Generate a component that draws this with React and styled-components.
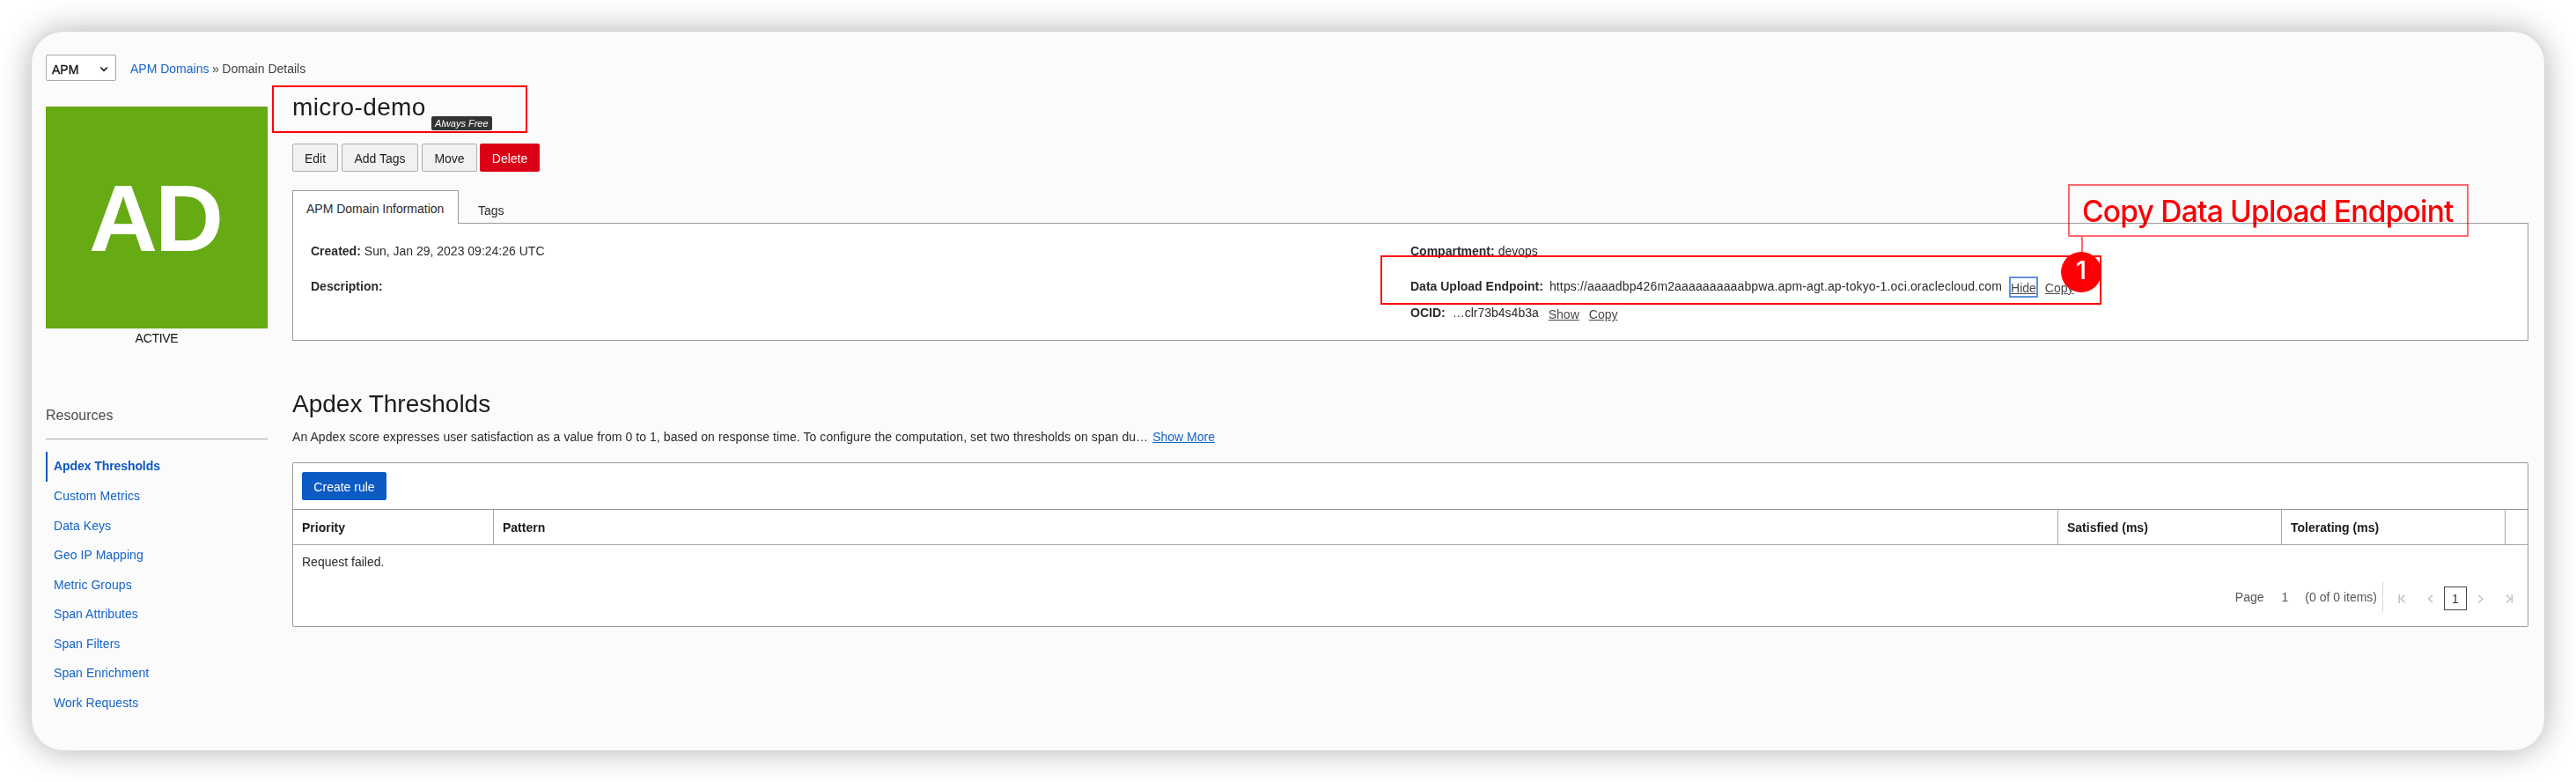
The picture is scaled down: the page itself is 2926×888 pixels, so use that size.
import React from "react";
import styled, { createGlobalStyle, css } from "styled-components";

const Global = createGlobalStyle`
  *, *::before, *::after { box-sizing: border-box; }
  html, body { margin: 0; padding: 0; background: #fff; }
  body { overflow: hidden; }
`;

const Stage = styled.div`
  width: 2926px;
  height: 888px;
  padding: 36px;
  background: #fff;
  font-family: "Liberation Sans", Arial, Helvetica, sans-serif;
  font-size: 14px;
  line-height: 20px;
  color: #2b2b2b;
`;

const Window = styled.div`
  position: relative;
  width: 2854px;
  height: 816px;
  padding: 26px 18px 0 16px;
  border-radius: 36px;
  background: #fbfbfb;
  box-shadow: 0 0 36px rgba(0, 0, 0, 0.32);
`;

const Breadcrumb = styled.nav`
  display: flex;
  height: 30px;
`;

const ServiceSelect = styled.div`
  display: flex;
  align-items: center;
  justify-content: space-between;
  width: 80px;
  height: 30px;
  padding: 3px 8px 0 6px;
  border: 1px solid #a3a8b1;
  border-radius: 2px;
  background: #fff;
  color: #1a1a1a;
  -webkit-text-stroke: 0.4px #1a1a1a;
`;

const Trail = styled.div`
  display: flex;
  gap: 3.5px;
  margin-left: 16px;
  padding-top: 6px;
  color: #404040;
`;

const Link = styled.a`
  color: #1463c8;
  text-decoration: ${(p) => (p.$underline ? "underline" : "none")};
`;

const Columns = styled.div`
  display: grid;
  grid-template-columns: 252px 2540px;
  column-gap: 28px;
`;

const Sidebar = styled.aside`
  padding-top: 29px;
`;

const StatusTile = styled.div`
  height: 252px;
  background: #66aa14;
  color: #fff;
  font-size: 108px;
  font-weight: 700;
  line-height: 253px;
  letter-spacing: -3px;
  text-align: center;
  text-indent: -4px;
`;

const StatusLabel = styled.div`
  height: 22px;
  padding-top: 1px;
  color: #111;
  letter-spacing: -0.3px;
  text-align: center;
`;

const ResourcesTitle = styled.h2`
  height: 38px;
  margin: 66px 0 0;
  border-bottom: 1px solid #a3aab2;
  color: #4a4a4a;
  font-size: 16px;
  font-weight: 400;
  line-height: 22px;
`;

const ResourceList = styled.ul`
  margin: 14px 0 0;
  padding: 0;
  list-style: none;
`;

const ResourceItem = styled.li`
  height: 33.5px;
  padding: 6.5px 0 0 9px;
  color: #1463c8;
  letter-spacing: 0.06px;

  ${(p) =>
    p.$active &&
    css`
      padding: 6px 0 0 7px;
      border-left: 2px solid #0b57c2;
      color: #0b57c2;
      font-weight: 700;
      letter-spacing: -0.08px;
    `}
`;

const Main = styled.main`
  padding-top: 17px;
`;

const TitleRow = styled.div`
  display: flex;
  height: 54px;
  gap: 6px;
`;

const Heading = styled.h1`
  margin: 0;
  color: #1c1c1c;
  font-size: 28px;
  font-weight: 400;
  line-height: 25px;
  letter-spacing: ${(p) => p.$spacing || "0"};
`;

const FreeBadge = styled.span`
  width: 69px;
  height: 16px;
  margin-top: 23px;
  border-radius: 2px;
  background: #333;
  color: #fff;
  font-size: 11px;
  font-style: italic;
  line-height: 16px;
  text-align: center;
`;

const tones = {
  plain: { bg: "#f1f1f1", line: "#a6adb6", ink: "#1c1c1c" },
  danger: { bg: "#dc0016", line: "#dc0016", ink: "#fff" },
  primary: { bg: "#0c5ac4", line: "#0c5ac4", ink: "#fff" },
};

const Button = styled.button`
  width: ${(p) => p.$width}px;
  height: 32px;
  padding: 2px 0 0;
  border: 1px solid ${(p) => tones[p.$tone || "plain"].line};
  border-radius: 2px;
  background: ${(p) => tones[p.$tone || "plain"].bg};
  color: ${(p) => tones[p.$tone || "plain"].ink};
  font: inherit;
`;

const Actions = styled.div`
  display: flex;
  gap: 4px;

  ${Button}:last-child {
    margin-left: -1px;
  }
`;

const Tabs = styled.div`
  display: flex;
  height: 38px;
  margin-top: 21px;
`;

const Tab = styled.div`
  padding: 13px 22px 0;

  ${(p) =>
    p.$active &&
    css`
      position: relative;
      z-index: 1;
      width: 189px;
      padding: 10px 15px 0;
      border: 1px solid #999;
      border-bottom: 0;
      background: #fff;
    `}
`;

const InfoPanel = styled.section`
  display: grid;
  grid-template-columns: 1249px 1fr;
  height: 134px;
  margin-top: -1px;
  padding: 21px 20px 0;
  border: 1px solid #999;
  background: #fff;
`;

const Field = styled.div`
  display: flex;
  height: ${(p) => p.$height || 40}px;
  white-space: pre;
`;

const Label = styled.strong`
  margin-right: ${(p) => p.$gap || 4}px;
`;

const Endpoint = styled.span`
  letter-spacing: 0.145px;
`;

const FieldAction = styled.a`
  height: 20px;
  margin: 2px 0 0 ${(p) => p.$gap}px;
  color: #4a4a4a;
  text-decoration: underline;

  ${(p) =>
    p.$focused &&
    css`
      height: 24px;
      margin-top: -1px;
      padding: 1px 0;
      border: 2px solid #5e93dd;
    `}
`;

const SectionTitle = styled(Heading).attrs({ as: "h2" })`
  margin-top: 59px;
`;

const Summary = styled.p`
  display: flex;
  gap: 5px;
  height: 20px;
  margin: 15px 0 0;
`;

const SummaryText = styled.span`
  letter-spacing: 0.07px;
`;

const TableCard = styled.section`
  height: 187px;
  margin-top: 19px;
  border: 1px solid #999;
  border-radius: 2px;
  background: #fff;
`;

const Toolbar = styled.div`
  height: 53px;
  padding: 10px;
  border-bottom: 1px solid #999;
`;

const HeaderRow = styled.div`
  display: grid;
  grid-template-columns: 228px 1777px 254px 254px 1fr;
  height: 40px;
  border-bottom: 1px solid #a3aab2;
`;

const HeaderCell = styled.div`
  padding: 10px;
  border-right: ${(p) => (p.$last ? "0" : "1px solid #a3aab2")};
  color: #1a1a1a;
  font-weight: 700;
`;

const EmptyRow = styled.div`
  height: 42px;
  padding: 9px 10px 0;
`;

const Pager = styled.div`
  display: flex;
  justify-content: flex-end;
  height: 34px;
  padding-right: 16px;
  color: #555;
`;

const PagerText = styled.span`
  margin-right: ${(p) => p.$gap}px;
  padding-top: 7px;
`;

const PagerNav = styled.div`
  display: flex;
  align-items: flex-start;
  width: 149px;
  border-left: 1px solid #d6d6d6;

  svg {
    flex: none;
    margin-top: 14px;
  }
`;

const CurrentPage = styled.span`
  width: 26px;
  height: 27px;
  margin: 5px 12px 0;
  border: 1px solid #444;
  color: #333;
  line-height: 26px;
  text-align: center;
`;

const Highlight = styled.div`
  position: absolute;
  left: ${(p) => p.$x}px;
  top: ${(p) => p.$y}px;
  width: ${(p) => p.$w}px;
  height: ${(p) => p.$h}px;
  border: 2px solid #fd0006;
`;

const Callout = styled.div`
  position: absolute;
  left: 2313px;
  top: 173px;
  width: 455px;
  height: 60px;
  padding-left: 14px;
  border: 2px solid #fd6a70;
  color: #fd0006;
  font-family: Inter, Roboto, sans-serif;
  font-size: 33.5px;
  font-weight: 500;
  letter-spacing: -0.77px;
  line-height: 58px;
  white-space: nowrap;
  mix-blend-mode: multiply;

  &::after {
    content: "";
    position: absolute;
    left: 13px;
    top: 58px;
    width: 2px;
    height: 18px;
    background: #fd6a70;
  }
`;

const Marker = styled.div`
  position: absolute;
  left: 2305px;
  top: 250px;
  width: 46px;
  height: 46px;
  border-radius: 50%;
  background: #fd0006;
  color: #fff;
  font-family: Inter, Roboto, sans-serif;
  font-size: 29px;
  font-weight: 500;
  line-height: 41px;
  text-align: center;
`;

const Glyph = ({ d, width, height = 10, color = "#bdbdbd", stroke = 1.4 }) => (
  <svg width={width} height={height} viewBox={`0 0 ${width} ${height}`} fill="none" stroke={color} strokeWidth={stroke}>
    <path d={d} />
  </svg>
);

const resources = [
  "Apdex Thresholds",
  "Custom Metrics",
  "Data Keys",
  "Geo IP Mapping",
  "Metric Groups",
  "Span Attributes",
  "Span Filters",
  "Span Enrichment",
  "Work Requests",
];

export default function App() {
  return (
    <>
      <Global />
      <Stage>
        <Window>
          <Breadcrumb>
            <ServiceSelect>
              APM
              <Glyph d="M1.3 1.5 L5 5.2 L8.7 1.5" width={10} height={7} color="#222" stroke={1.7} />
            </ServiceSelect>
            <Trail>
              <Link>APM Domains</Link>
              <span>»</span>
              <span>Domain Details</span>
            </Trail>
          </Breadcrumb>
          <Columns>
            <Sidebar>
              <StatusTile>AD</StatusTile>
              <StatusLabel>ACTIVE</StatusLabel>
              <ResourcesTitle>Resources</ResourcesTitle>
              <ResourceList>
                {resources.map((name, i) => (
                  <ResourceItem key={name} $active={i === 0}>
                    {name}
                  </ResourceItem>
                ))}
              </ResourceList>
            </Sidebar>
            <Main>
              <TitleRow>
                <Heading $spacing="0.4px">micro-demo</Heading>
                <FreeBadge>Always Free</FreeBadge>
              </TitleRow>
              <Actions>
                <Button $width={52}>Edit</Button>
                <Button $width={87}>Add Tags</Button>
                <Button $width={63}>Move</Button>
                <Button $width={68} $tone="danger">Delete</Button>
              </Actions>
              <Tabs>
                <Tab $active>APM Domain Information</Tab>
                <Tab>Tags</Tab>
              </Tabs>
              <InfoPanel>
                <div>
                  <Field>
                    <Label>Created:</Label>
                    <span>Sun, Jan 29, 2023 09:24:26 UTC</span>
                  </Field>
                  <Field>
                    <Label>Description:</Label>
                  </Field>
                </div>
                <div>
                  <Field>
                    <Label>Compartment:</Label>
                    <span>devops</span>
                  </Field>
                  <Field $height={30}>
                    <Label $gap={7}>Data Upload Endpoint:</Label>
                    <Endpoint>https://aaaadbp426m2aaaaaaaaaabpwa.apm-agt.ap-tokyo-1.oci.oraclecloud.com</Endpoint>
                    <FieldAction $gap={8} $focused>Hide</FieldAction>
                    <FieldAction $gap={8}>Copy</FieldAction>
                  </Field>
                  <Field>
                    <Label $gap={8}>OCID:</Label>
                    <span>…clr73b4s4b3a</span>
                    <FieldAction $gap={11}>Show</FieldAction>
                    <FieldAction $gap={11}>Copy</FieldAction>
                  </Field>
                </div>
              </InfoPanel>
              <SectionTitle>Apdex Thresholds</SectionTitle>
              <Summary>
                <SummaryText>
                  An Apdex score expresses user satisfaction as a value from 0 to 1, based on response time. To configure the
                  computation, set two thresholds on span du…
                </SummaryText>
                <Link $underline>Show More</Link>
              </Summary>
              <TableCard>
                <Toolbar>
                  <Button $width={96} $tone="primary">Create rule</Button>
                </Toolbar>
                <HeaderRow>
                  <HeaderCell>Priority</HeaderCell>
                  <HeaderCell>Pattern</HeaderCell>
                  <HeaderCell>Satisfied (ms)</HeaderCell>
                  <HeaderCell>Tolerating (ms)</HeaderCell>
                  <HeaderCell $last />
                </HeaderRow>
                <EmptyRow>Request failed.</EmptyRow>
                <Pager>
                  <PagerText $gap={20}>Page</PagerText>
                  <PagerText $gap={19}>1</PagerText>
                  <PagerText $gap={6}>(0 of 0 items)</PagerText>
                  <PagerNav>
                    <Glyph d="M18.2 0 V10 M24.5 0.7 L20 5 L24.5 9.3" width={50} />
                    <Glyph d="M6 0.7 L1.5 5 L6 9.3" width={7} />
                    <CurrentPage>1</CurrentPage>
                    <Glyph d="M1.3 0.7 L6 5 L1.3 9.3" width={32} />
                    <Glyph d="M1 0.7 L5.7 5 L1 9.3 M7.3 0 V10" width={8} />
                  </PagerNav>
                </Pager>
              </TableCard>
            </Main>
          </Columns>
          <Highlight $x={273} $y={61} $w={290} $h={54} />
          <Highlight $x={1532} $y={254} $w={819} $h={56} />
          <Callout>Copy Data Upload Endpoint</Callout>
          <Marker>1</Marker>
        </Window>
      </Stage>
    </>
  );
}
